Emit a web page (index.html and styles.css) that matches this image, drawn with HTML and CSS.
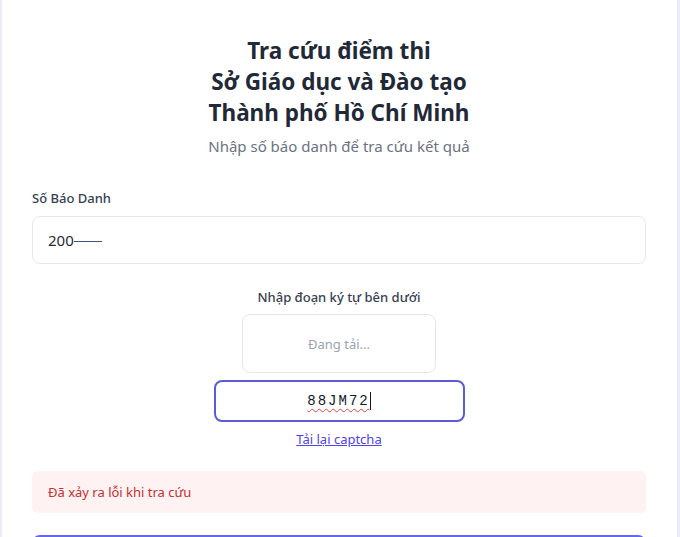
FILE: index.html
```html
<!DOCTYPE html>
<html lang="vi">
<head>
    <meta charset="UTF-8">
    <meta name="viewport" content="width=device-width, initial-scale=1.0">
    <title>Tra cứu điểm thi</title>
    <link rel="stylesheet" href="styles.css">
</head>
<body>
    <div class="card">
        <header class="header">
            <h1>Tra cứu điểm thi<br>Sở Giáo dục và Đào tạo<br>Thành phố Hồ Chí Minh</h1>
            <p class="subtitle">Nhập số báo danh để tra cứu kết quả</p>
        </header>

        <div class="field">
            <label class="label" for="sbd">Số Báo Danh</label>
            <div class="input" id="sbd">200<span class="mask"></span></div>
        </div>

        <div class="captcha">
            <div class="label">Nhập đoạn ký tự bên dưới</div>
            <div class="captcha-image">Đang tải...</div>
            <div class="captcha-input"><span class="typed">88JM72</span><span class="caret"></span></div>
            <a href="#" class="reload">Tải lại captcha</a>
        </div>

        <div class="error">Đã xảy ra lỗi khi tra cứu</div>

        <button class="submit">Tra cứu</button>
    </div>
</body>
</html>
```

FILE: styles.css
```css
body {
    margin: 0;
    padding: 0 3px 0 2px;
    background-color: #e9ebf7;
    font-family: "Noto Sans", "Open Sans", sans-serif;
    color: #1f2937;
}

.card {
    background-color: #ffffff;
    padding: 35px 31px 40px 30px;
    display: flex;
    flex-direction: column;
    gap: 24px;
}

.header {
    text-align: center;
    margin-bottom: 6px;
}

.header h1 {
    margin: 0;
    font-size: 22.5px;
    line-height: 31px;
    font-weight: 700;
    color: #1f2937;
}

.subtitle {
    margin: 6px 0 0;
    font-size: 15px;
    line-height: 24px;
    color: #6b7280;
}

.field {
    display: flex;
    flex-direction: column;
    gap: 8px;
}

.label {
    font-size: 13px;
    line-height: 20px;
    font-weight: 500;
    color: #374151;
}

.input {
    border: 1px solid #e5e7eb;
    border-radius: 8px;
    padding: 11px 15px;
    font-size: 15px;
    line-height: 24px;
    color: #1f2937;
}

.mask {
    display: inline-block;
    width: 28px;
    height: 1px;
    background-color: #3f5480;
    vertical-align: middle;
}

.captcha {
    display: flex;
    flex-direction: column;
    align-items: center;
    margin-top: -1px;
    margin-bottom: -2px;
}

.captcha-image {
    margin-top: 7px;
    width: 192px;
    height: 57px;
    border: 1px solid #e5e7eb;
    border-radius: 8px;
    display: flex;
    align-items: center;
    justify-content: center;
    font-size: 13px;
    color: #9ca3af;
}

.captcha-input {
    margin-top: 7px;
    width: 247px;
    height: 38px;
    border: 2px solid #5b5bd6;
    border-radius: 8px;
    display: flex;
    align-items: center;
    justify-content: center;
    font-family: "Liberation Mono", monospace;
    font-size: 14px;
    color: #111827;
}

.typed {
    letter-spacing: 2px;
    text-decoration: underline wavy #e04545;
    text-decoration-thickness: 1px;
    text-underline-offset: 3px;
}

.caret {
    display: inline-block;
    width: 1px;
    height: 18px;
    background-color: #111827;
}

.reload {
    margin-top: 7px;
    font-size: 13px;
    line-height: 20px;
    color: #4f46e5;
}

.error {
    background-color: #fef2f2;
    border-radius: 6px;
    padding: 11px 16px;
    font-size: 13px;
    line-height: 20px;
    color: #c53030;
    margin-bottom: -2px;
}

.submit {
    height: 44px;
    border: none;
    border-radius: 8px;
    background-color: #6366f1;
    color: #ffffff;
    font-family: inherit;
    font-size: 15px;
    font-weight: 600;
}
```
